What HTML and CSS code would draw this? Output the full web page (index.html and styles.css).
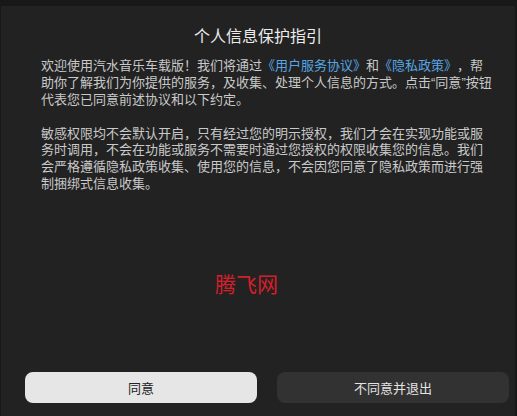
FILE: index.html
```html
<!DOCTYPE html>
<html lang="zh-CN">
<head>
    <meta charset="UTF-8">
    <meta name="viewport" content="width=device-width, initial-scale=1.0">
    <title>个人信息保护指引</title>
    <link rel="stylesheet" href="styles.css">
</head>
<body>

    <div class="dialog">
        <h1 class="title">个人信息保护指引</h1>
        <div class="content">
            <p>欢迎使用汽水音乐车载版！我们将通过<a href="#">《用户服务协议》</a>和<a href="#">《隐私政策》</a>，帮助你了解我们为你提供的服务，及收集、处理个人信息的方式。点击<span class="q">“</span>同意<span class="q">”</span>按钮代表您已同意前述协议和以下约定。</p>
            <p>敏感权限均不会默认开启，只有经过您的明示授权，我们才会在实现功能或服务时调用，不会在功能或服务不需要时通过您授权的权限收集您的信息。我们会严格遵循隐私政策收集、使用您的信息，不会因您同意了隐私政策而进行强制捆绑式信息收集。</p>
        </div>
        <div class="actions">
            <button class="btn btn-agree">同意</button>
            <button class="btn btn-exit">不同意并退出</button>
        </div>
        <span class="watermark">腾飞网</span>
    </div>

</body>
</html>
```

FILE: styles.css
```css
html, body {
    height: 100%;
}

body {
    margin: 0;
    background-color: #171817;
    font-family: "Noto Sans CJK SC", "Noto Sans", sans-serif;
    text-spacing-trim: space-all;
    display: flex;
    flex-direction: column;
}

.dialog {
    position: relative;
    flex: 1;
    margin: 6px 2px 0 1px;
    background: #222222;
    display: flex;
    flex-direction: column;
    padding: 18px 0 13px 0;
}

.title {
    margin: 0;
    font-size: 16px;
    line-height: 22px;
    font-weight: normal;
    color: #ececec;
    text-align: center;
}

.content {
    width: 454px;
    margin: 11px 0 0 40px;
    font-size: 13px;
    line-height: 16.67px;
    color: #c9c9c9;
}

.content p {
    margin: 0 0 16.67px 0;
}

.content a {
    color: #57a6e4;
    text-decoration: none;
}

.content .q {
    font-family: "Liberation Sans", sans-serif;
}

.actions {
    margin-top: auto;
    display: flex;
    gap: 20px;
    padding: 0 6px 0 24px;
}

.btn {
    flex: 1;
    height: 31px;
    border: none;
    border-radius: 8px;
    font-family: inherit;
    font-size: 13px;
    cursor: pointer;
}

.btn-agree {
    background: #e6e6e6;
    color: #222222;
}

.btn-exit {
    background: #323232;
    color: #e2e2e2;
}

.watermark {
    position: absolute;
    left: 214px;
    top: 265px;
    font-size: 21px;
    line-height: 24px;
    color: #d41f2b;
}
```
